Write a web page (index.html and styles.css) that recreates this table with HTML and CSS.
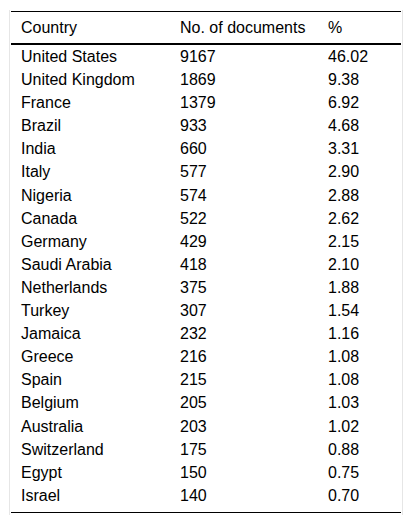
FILE: index.html
```html
<!DOCTYPE html>
<html>
<head>
<meta charset="utf-8">
<link rel="stylesheet" href="styles.css">
</head>
<body>
<div class="wrap">
<table class="data">
<colgroup><col class="c1"><col class="c2"><col class="c3"></colgroup>
<thead>
<tr><th>Country</th><th>No. of documents</th><th>%</th></tr>
</thead>
<tbody>
<tr><td>United States</td><td>9167</td><td>46.02</td></tr>
<tr><td>United Kingdom</td><td>1869</td><td>9.38</td></tr>
<tr><td>France</td><td>1379</td><td>6.92</td></tr>
<tr><td>Brazil</td><td>933</td><td>4.68</td></tr>
<tr><td>India</td><td>660</td><td>3.31</td></tr>
<tr><td>Italy</td><td>577</td><td>2.90</td></tr>
<tr><td>Nigeria</td><td>574</td><td>2.88</td></tr>
<tr><td>Canada</td><td>522</td><td>2.62</td></tr>
<tr><td>Germany</td><td>429</td><td>2.15</td></tr>
<tr><td>Saudi Arabia</td><td>418</td><td>2.10</td></tr>
<tr><td>Netherlands</td><td>375</td><td>1.88</td></tr>
<tr><td>Turkey</td><td>307</td><td>1.54</td></tr>
<tr><td>Jamaica</td><td>232</td><td>1.16</td></tr>
<tr><td>Greece</td><td>216</td><td>1.08</td></tr>
<tr><td>Spain</td><td>215</td><td>1.08</td></tr>
<tr><td>Belgium</td><td>205</td><td>1.03</td></tr>
<tr><td>Australia</td><td>203</td><td>1.02</td></tr>
<tr><td>Switzerland</td><td>175</td><td>0.88</td></tr>
<tr><td>Egypt</td><td>150</td><td>0.75</td></tr>
<tr><td>Israel</td><td>140</td><td>0.70</td></tr>
</tbody>
</table>
</div>
</body>
</html>
```
FILE: styles.css
```css
html, body {
  margin: 0;
  padding: 0;
  background: #fff;
}
body {
  font-family: "Liberation Sans", Arial, sans-serif;
  color: #000;
}
.wrap {
  margin: 10px 10px 0 9px;
  padding: 1px 1px 2px 1px;
  border-left: 1px solid #e6e6e6;
  border-right: 1px solid #e6e6e6;
}
.data {
  width: 390px;
  border-collapse: collapse;
  table-layout: fixed;
  font-size: 16px;
  border-top: 1px solid #000;
  border-bottom: 1px solid #000;
}
.c1 { width: 159px; }
.c2 { width: 148px; }
.c3 { width: 83px; }
.data th {
  font-weight: normal;
  text-align: left;
  padding: 4px 10px 4px 10px;
  line-height: 23px;
  border-bottom: 2px solid #000;
}
.data td {
  padding: 0 10px;
  line-height: 23.1px;
  white-space: nowrap;
}
.data tbody tr:first-child td {
  padding-top: 0;
}
.data tbody tr:last-child td {
  padding-bottom: 5px;
}
```
